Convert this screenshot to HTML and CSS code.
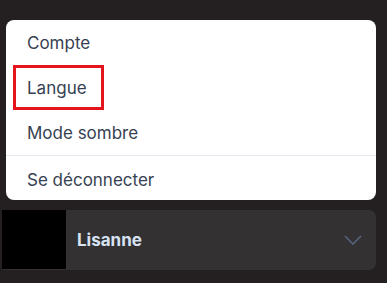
FILE: index.html
```html
<!DOCTYPE html>
<html lang="fr">
<head>
<meta charset="utf-8">
<link rel="stylesheet" href="styles.css">
</head>
<body>
  <div class="menu">
    <div class="item"><span class="label">Compte</span></div>
    <div class="item"><span class="label focused">Langue</span></div>
    <div class="item"><span class="label">Mode sombre</span></div>
    <div class="divider"></div>
    <div class="item last"><span class="label">Se déconnecter</span></div>
  </div>
  <div class="user">
    <div class="avatar"></div>
    <div class="name">Lisanne</div>
    <svg class="chevron" width="18" height="10" viewBox="0 0 18 10">
      <path d="M1 1 L9 9 L17 1" fill="none" stroke="#56647d" stroke-width="1.6"/>
    </svg>
  </div>
</body>
</html>
```

FILE: styles.css
```css
html, body {
  margin: 0;
  padding: 0;
  background: #242021;
  width: 387px;
  height: 283px;
  overflow: hidden;
}

body {
  font-family: Inter, "Liberation Sans", sans-serif;
}

.menu {
  margin: 20px 11px 0 6px;
  background: #ffffff;
  border-radius: 8px;
  height: 180px;
  display: flex;
  flex-direction: column;
  padding-left: 7px;
  box-sizing: border-box;
}

.item {
  height: 45px;
  display: flex;
  align-items: stretch;
}

.item.last {
  height: 44px;
  padding-top: 4px;
  box-sizing: border-box;
}

.label {
  display: flex;
  align-items: center;
  padding: 0 14px 0 11px;
  border: 3px solid transparent;
  font-size: 17px;
  color: #364152;
}

.label.focused {
  border-color: #e3141c;
}

.divider {
  height: 1px;
  background: #e3e8ef;
  margin-left: -7px;
}

.user {
  margin: 10px 11px 0 2px;
  height: 60px;
  background: #333132;
  border-radius: 0 7px 7px 0;
  display: flex;
  align-items: center;
}

.avatar {
  width: 64px;
  height: 59px;
  align-self: flex-start;
  background: #000000;
}

.name {
  margin-left: 11px;
  font-size: 17px;
  font-weight: 700;
  color: #d7e3f3;
  flex: 1;
}

.chevron {
  margin-right: 14px;
}
```
